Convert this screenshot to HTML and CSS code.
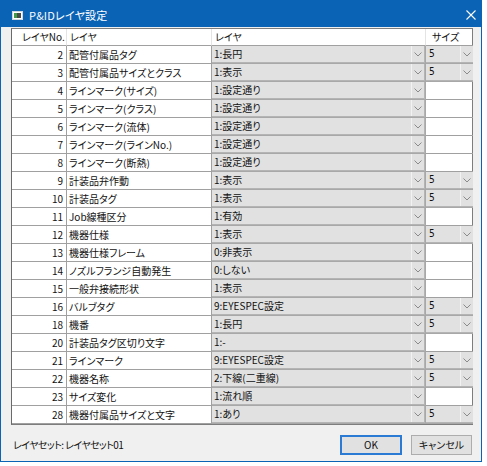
FILE: index.html
```html
<!DOCTYPE html>
<html lang="ja">
<head>
<meta charset="utf-8">
<title>P&amp;IDレイヤ設定</title>
<link rel="stylesheet" href="styles.css">
</head>
<body>
<div class="window">
  <div class="titlebar">
    <svg class="appicon" width="11" height="9" viewBox="0 0 11 9">
      <rect x="0.5" y="0.5" width="10" height="8" fill="#ffffff" stroke="#cfd8e0"/>
      <rect x="2" y="2" width="3" height="5" fill="#3f9a4a"/>
      <rect x="5" y="2" width="4" height="5" fill="#4a4a4a"/>
    </svg>
    <span class="title">P&amp;IDレイヤ設定</span>
    <svg class="close" width="10" height="10" viewBox="0 0 10 10">
      <path d="M0.5 0.5 L9.5 9.5 M9.5 0.5 L0.5 9.5" stroke="#ffffff" stroke-width="1.1" fill="none"/>
    </svg>
  </div>
  <div class="content">
    <div class="grid">
      <div class="row head">
        <div class="c no">レイヤNo.</div>
        <div class="c name">レイヤ</div>
        <div class="c layer">レイヤ</div>
        <div class="c size">サイズ</div>
      </div>

      <div class="row"><div class="c no">2</div><div class="c name">配管付属品タグ</div>
        <div class="c layer"><div class="combo"><span class="val">1:長円</span><span class="btn"><svg width="8" height="5" viewBox="0 0 8 5"><polyline points="0.5,0.5 4,4 7.5,0.5" fill="none" stroke="#8a8a8a"/></svg></span></div></div>
        <div class="c size"><div class="combo"><span class="val num">5</span><span class="btn"><svg width="8" height="5" viewBox="0 0 8 5"><polyline points="0.5,0.5 4,4 7.5,0.5" fill="none" stroke="#8a8a8a"/></svg></span></div></div></div>

      <div class="row"><div class="c no">3</div><div class="c name">配管付属品サイズとクラス</div>
        <div class="c layer"><div class="combo"><span class="val">1:表示</span><span class="btn"><svg width="8" height="5" viewBox="0 0 8 5"><polyline points="0.5,0.5 4,4 7.5,0.5" fill="none" stroke="#8a8a8a"/></svg></span></div></div>
        <div class="c size"><div class="combo"><span class="val num">5</span><span class="btn"><svg width="8" height="5" viewBox="0 0 8 5"><polyline points="0.5,0.5 4,4 7.5,0.5" fill="none" stroke="#8a8a8a"/></svg></span></div></div></div>

      <div class="row"><div class="c no">4</div><div class="c name">ラインマーク(サイズ)</div>
        <div class="c layer"><div class="combo"><span class="val">1:設定通り</span><span class="btn"><svg width="8" height="5" viewBox="0 0 8 5"><polyline points="0.5,0.5 4,4 7.5,0.5" fill="none" stroke="#8a8a8a"/></svg></span></div></div>
        <div class="c size"></div></div>

      <div class="row"><div class="c no">5</div><div class="c name">ラインマーク(クラス)</div>
        <div class="c layer"><div class="combo"><span class="val">1:設定通り</span><span class="btn"><svg width="8" height="5" viewBox="0 0 8 5"><polyline points="0.5,0.5 4,4 7.5,0.5" fill="none" stroke="#8a8a8a"/></svg></span></div></div>
        <div class="c size"></div></div>

      <div class="row"><div class="c no">6</div><div class="c name">ラインマーク(流体)</div>
        <div class="c layer"><div class="combo"><span class="val">1:設定通り</span><span class="btn"><svg width="8" height="5" viewBox="0 0 8 5"><polyline points="0.5,0.5 4,4 7.5,0.5" fill="none" stroke="#8a8a8a"/></svg></span></div></div>
        <div class="c size"></div></div>

      <div class="row"><div class="c no">7</div><div class="c name">ラインマーク(ラインNo.)</div>
        <div class="c layer"><div class="combo"><span class="val">1:設定通り</span><span class="btn"><svg width="8" height="5" viewBox="0 0 8 5"><polyline points="0.5,0.5 4,4 7.5,0.5" fill="none" stroke="#8a8a8a"/></svg></span></div></div>
        <div class="c size"></div></div>

      <div class="row"><div class="c no">8</div><div class="c name">ラインマーク(断熱)</div>
        <div class="c layer"><div class="combo"><span class="val">1:設定通り</span><span class="btn"><svg width="8" height="5" viewBox="0 0 8 5"><polyline points="0.5,0.5 4,4 7.5,0.5" fill="none" stroke="#8a8a8a"/></svg></span></div></div>
        <div class="c size"></div></div>

      <div class="row"><div class="c no">9</div><div class="c name">計装品弁作動</div>
        <div class="c layer"><div class="combo"><span class="val">1:表示</span><span class="btn"><svg width="8" height="5" viewBox="0 0 8 5"><polyline points="0.5,0.5 4,4 7.5,0.5" fill="none" stroke="#8a8a8a"/></svg></span></div></div>
        <div class="c size"><div class="combo"><span class="val num">5</span><span class="btn"><svg width="8" height="5" viewBox="0 0 8 5"><polyline points="0.5,0.5 4,4 7.5,0.5" fill="none" stroke="#8a8a8a"/></svg></span></div></div></div>

      <div class="row"><div class="c no">10</div><div class="c name">計装品タグ</div>
        <div class="c layer"><div class="combo"><span class="val">1:表示</span><span class="btn"><svg width="8" height="5" viewBox="0 0 8 5"><polyline points="0.5,0.5 4,4 7.5,0.5" fill="none" stroke="#8a8a8a"/></svg></span></div></div>
        <div class="c size"><div class="combo"><span class="val num">5</span><span class="btn"><svg width="8" height="5" viewBox="0 0 8 5"><polyline points="0.5,0.5 4,4 7.5,0.5" fill="none" stroke="#8a8a8a"/></svg></span></div></div></div>

      <div class="row"><div class="c no">11</div><div class="c name">Job線種区分</div>
        <div class="c layer"><div class="combo"><span class="val">1:有効</span><span class="btn"><svg width="8" height="5" viewBox="0 0 8 5"><polyline points="0.5,0.5 4,4 7.5,0.5" fill="none" stroke="#8a8a8a"/></svg></span></div></div>
        <div class="c size"></div></div>

      <div class="row"><div class="c no">12</div><div class="c name">機器仕様</div>
        <div class="c layer"><div class="combo"><span class="val">1:表示</span><span class="btn"><svg width="8" height="5" viewBox="0 0 8 5"><polyline points="0.5,0.5 4,4 7.5,0.5" fill="none" stroke="#8a8a8a"/></svg></span></div></div>
        <div class="c size"><div class="combo"><span class="val num">5</span><span class="btn"><svg width="8" height="5" viewBox="0 0 8 5"><polyline points="0.5,0.5 4,4 7.5,0.5" fill="none" stroke="#8a8a8a"/></svg></span></div></div></div>

      <div class="row"><div class="c no">13</div><div class="c name">機器仕様フレーム</div>
        <div class="c layer"><div class="combo"><span class="val">0:非表示</span><span class="btn"><svg width="8" height="5" viewBox="0 0 8 5"><polyline points="0.5,0.5 4,4 7.5,0.5" fill="none" stroke="#8a8a8a"/></svg></span></div></div>
        <div class="c size"></div></div>

      <div class="row"><div class="c no">14</div><div class="c name">ノズルフランジ自動発生</div>
        <div class="c layer"><div class="combo"><span class="val">0:しない</span><span class="btn"><svg width="8" height="5" viewBox="0 0 8 5"><polyline points="0.5,0.5 4,4 7.5,0.5" fill="none" stroke="#8a8a8a"/></svg></span></div></div>
        <div class="c size"></div></div>

      <div class="row"><div class="c no">15</div><div class="c name">一般弁接続形状</div>
        <div class="c layer"><div class="combo"><span class="val">1:表示</span><span class="btn"><svg width="8" height="5" viewBox="0 0 8 5"><polyline points="0.5,0.5 4,4 7.5,0.5" fill="none" stroke="#8a8a8a"/></svg></span></div></div>
        <div class="c size"></div></div>

      <div class="row"><div class="c no">16</div><div class="c name">バルブタグ</div>
        <div class="c layer"><div class="combo"><span class="val">9:EYESPEC設定</span><span class="btn"><svg width="8" height="5" viewBox="0 0 8 5"><polyline points="0.5,0.5 4,4 7.5,0.5" fill="none" stroke="#8a8a8a"/></svg></span></div></div>
        <div class="c size"><div class="combo"><span class="val num">5</span><span class="btn"><svg width="8" height="5" viewBox="0 0 8 5"><polyline points="0.5,0.5 4,4 7.5,0.5" fill="none" stroke="#8a8a8a"/></svg></span></div></div></div>

      <div class="row"><div class="c no">18</div><div class="c name">機番</div>
        <div class="c layer"><div class="combo"><span class="val">1:長円</span><span class="btn"><svg width="8" height="5" viewBox="0 0 8 5"><polyline points="0.5,0.5 4,4 7.5,0.5" fill="none" stroke="#8a8a8a"/></svg></span></div></div>
        <div class="c size"><div class="combo"><span class="val num">5</span><span class="btn"><svg width="8" height="5" viewBox="0 0 8 5"><polyline points="0.5,0.5 4,4 7.5,0.5" fill="none" stroke="#8a8a8a"/></svg></span></div></div></div>

      <div class="row"><div class="c no">20</div><div class="c name">計装品タグ区切り文字</div>
        <div class="c layer"><div class="combo"><span class="val">1:-</span><span class="btn"><svg width="8" height="5" viewBox="0 0 8 5"><polyline points="0.5,0.5 4,4 7.5,0.5" fill="none" stroke="#8a8a8a"/></svg></span></div></div>
        <div class="c size"></div></div>

      <div class="row"><div class="c no">21</div><div class="c name">ラインマーク</div>
        <div class="c layer"><div class="combo"><span class="val">9:EYESPEC設定</span><span class="btn"><svg width="8" height="5" viewBox="0 0 8 5"><polyline points="0.5,0.5 4,4 7.5,0.5" fill="none" stroke="#8a8a8a"/></svg></span></div></div>
        <div class="c size"><div class="combo"><span class="val num">5</span><span class="btn"><svg width="8" height="5" viewBox="0 0 8 5"><polyline points="0.5,0.5 4,4 7.5,0.5" fill="none" stroke="#8a8a8a"/></svg></span></div></div></div>

      <div class="row"><div class="c no">22</div><div class="c name">機器名称</div>
        <div class="c layer"><div class="combo"><span class="val">2:下線(二重線)</span><span class="btn"><svg width="8" height="5" viewBox="0 0 8 5"><polyline points="0.5,0.5 4,4 7.5,0.5" fill="none" stroke="#8a8a8a"/></svg></span></div></div>
        <div class="c size"><div class="combo"><span class="val num">5</span><span class="btn"><svg width="8" height="5" viewBox="0 0 8 5"><polyline points="0.5,0.5 4,4 7.5,0.5" fill="none" stroke="#8a8a8a"/></svg></span></div></div></div>

      <div class="row"><div class="c no">23</div><div class="c name">サイズ変化</div>
        <div class="c layer"><div class="combo"><span class="val">1:流れ順</span><span class="btn"><svg width="8" height="5" viewBox="0 0 8 5"><polyline points="0.5,0.5 4,4 7.5,0.5" fill="none" stroke="#8a8a8a"/></svg></span></div></div>
        <div class="c size"></div></div>

      <div class="row"><div class="c no">28</div><div class="c name">機器付属品サイズと文字</div>
        <div class="c layer"><div class="combo"><span class="val">1:あり</span><span class="btn"><svg width="8" height="5" viewBox="0 0 8 5"><polyline points="0.5,0.5 4,4 7.5,0.5" fill="none" stroke="#8a8a8a"/></svg></span></div></div>
        <div class="c size"><div class="combo"><span class="val num">5</span><span class="btn"><svg width="8" height="5" viewBox="0 0 8 5"><polyline points="0.5,0.5 4,4 7.5,0.5" fill="none" stroke="#8a8a8a"/></svg></span></div></div></div>
    </div>
    <div class="footer">
      <span class="setname">レイヤセット:&nbsp;レイヤセット01</span>
      <button class="btn-ok">OK</button>
      <button class="btn-cancel">キャンセル</button>
    </div>
  </div>
</div>
</body>
</html>
```

FILE: styles.css
```css
html, body {
  margin: 0;
  padding: 0;
  background: #ffffff;
}

body {
  font-family: "Noto Sans CJK JP", "Liberation Sans", sans-serif;
  font-size: 10px;
  font-feature-settings: "palt";
  color: #111;
}

.window {
  width: 482px;
  height: 462px;
  box-sizing: border-box;
  border: 1px solid #0b63b5;
  background: #f0f0f0;
  display: flex;
  flex-direction: column;
}

.titlebar {
  height: 26px;
  flex: none;
  background: #0b63b5;
  display: flex;
  align-items: center;
  padding-left: 11px;
  padding-right: 5px;
  color: #fff;
}

.appicon {
  flex: none;
  margin-top: 2px;
}

.title {
  margin-left: 6px;
  font-size: 11px;
  margin-top: 2px;
  letter-spacing: 0.2px;
}

.close {
  margin-left: auto;
  margin-top: 2px;
}

.content {
  flex: 1;
  padding: 1px 8px 0 10px;
  display: flex;
  flex-direction: column;
}

.grid {
  border: 1px solid #7d7d7d;
  border-left-color: #6a6a6a;
  background: #ffffff;
  display: flex;
  flex-direction: column;
}

.row {
  display: grid;
  grid-template-columns: 55px 145px 214px 47px;
  height: 18px;
}

.row.head {
  height: 17px;
}

.c {
  box-sizing: border-box;
  border-right: 1px solid #a0a0a0;
  border-bottom: 1px solid #a0a0a0;
  line-height: 17px;
  white-space: nowrap;
  overflow: hidden;
  min-width: 0;
}

.c.size {
  border-right: none;
}

.head .c {
  line-height: 16px;
  border-right-color: #e4e4e4;
  border-bottom-color: #a0a0a0;
}

.head .c.no {
  text-align: left;
  padding-left: 10px;
  padding-right: 0;
}

.head .c.name { padding-left: 3px; }
.head .c.layer { padding-left: 3px; }
.head .c.size { padding-left: 6px; }

.c.no {
  text-align: right;
  padding-right: 3px;
}

.c.name {
  padding-left: 2px;
}

.combo {
  height: 17px;
  box-sizing: border-box;
  background: #e1e1e1;
  border-right: 1px solid #b4b4b4;
  border-bottom: 1px solid #b4b4b4;
  display: flex;
  align-items: stretch;
}

.c.size .combo {
  border-right: none;
}

.c.layer:has(.combo),
.c.size:has(.combo) {
  border-color: #a8a8a8;
}

.val {
  flex: 1;
  padding-left: 2px;
  line-height: 16px;
  overflow: hidden;
}

.val.num {
  padding-left: 3px;
  font-family: "Liberation Sans Narrow", "DejaVu Sans Condensed", sans-serif;
}

.btn {
  flex: none;
  width: 12px;
  border-left: 1px solid #f2f2f2;
  display: flex;
  align-items: center;
  justify-content: center;
}

.footer {
  flex: 1;
  display: flex;
  align-items: center;
  padding-top: 3px;
  padding-right: 1px;
}

.setname {
  margin-left: 2px;
  flex: 1;
  letter-spacing: -0.6px;
}

.footer button {
  font-family: "Noto Sans CJK JP", "Liberation Sans", sans-serif;
  font-size: 10px;
  font-feature-settings: "palt";
  height: 20px;
  background: #e1e1e1;
  color: #111;
  padding: 0;
  margin: 0;
  box-sizing: border-box;
}

.btn-ok {
  width: 62px;
  border: 2px solid #2b7ad3;
}

.btn-cancel {
  width: 61px;
  margin-left: 9px !important;
  border: 1px solid #adadad;
}
```
